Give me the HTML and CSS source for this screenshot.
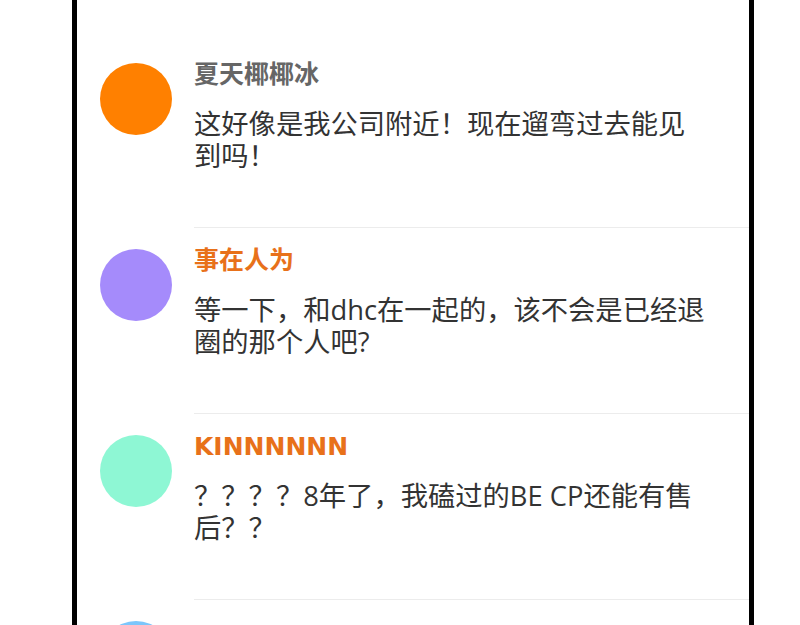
FILE: index.html
```html
<!DOCTYPE html>
<html lang="zh-CN">
<head>
  <meta charset="UTF-8" />
  <meta name="viewport" content="width=device-width, initial-scale=1.0" />
  <title>评论</title>
  <link rel="stylesheet" href="styles.css">
</head>
<body>
  <div class="phone">
    <ul class="comments">
      <li class="comment">
        <div class="avatar avatar-orange"></div>
        <div class="comment-body">
          <div class="name name-grey">夏天椰椰冰</div>
          <p class="text">这好像是我公司附近！现在遛弯过去能见到吗！</p>
        </div>
      </li>
      <li class="comment">
        <div class="avatar avatar-purple"></div>
        <div class="comment-body">
          <div class="name">事在人为</div>
          <p class="text">等一下，和dhc在一起的，该不会是已经退圈的那个人吧?</p>
        </div>
      </li>
      <li class="comment">
        <div class="avatar avatar-green"></div>
        <div class="comment-body">
          <div class="name">KINNNNNN</div>
          <p class="text">？？？？8年了，我磕过的BE CP还能有售后？？</p>
        </div>
      </li>
      <li class="comment">
        <div class="avatar avatar-blue"></div>
        <div class="comment-body">
          <div class="name">&nbsp;</div>
          <p class="text">&nbsp;</p>
        </div>
      </li>
    </ul>
  </div>
</body>
</html>
```

FILE: styles.css
```css
body {
  margin: 0;
  padding: 0;
  background: #fff;
  font-family: "Open Sans", "Noto Sans CJK SC", sans-serif;
  overflow: hidden;
}

.phone {
  margin-left: 72px;
  width: 672px;
  height: 625px;
  border-left: 5px solid #000;
  border-right: 5px solid #000;
  overflow: hidden;
}

.comments {
  list-style: none;
  margin: 0;
  padding: 42px 0 0 0;
}

.comment {
  display: flex;
  align-items: flex-start;
  padding-left: 23px;
}

.avatar {
  flex: 0 0 72px;
  width: 72px;
  height: 72px;
  margin-top: 21px;
  margin-right: 22px;
  border-radius: 50%;
}

.avatar-orange { background: #ff8000; }
.avatar-purple { background: #a58bfb; }
.avatar-green { background: #8ef7d4; }
.avatar-blue { background: #7cc6fb; }

.comment-body {
  flex: 1;
  padding: 20px 0 55px 0;
  border-bottom: 1px solid #ececec;
}

.name {
  font-family: "DejaVu Sans", "Noto Sans CJK SC", sans-serif;
  font-size: 25px;
  line-height: 26px;
  font-weight: bold;
  color: #e8711a;
}

.name-grey {
  color: #666;
}

.text {
  margin: 20px 0 0 0;
  padding-right: 38px;
  font-size: 27.3px;
  line-height: 32px;
  color: #333;
}
```
